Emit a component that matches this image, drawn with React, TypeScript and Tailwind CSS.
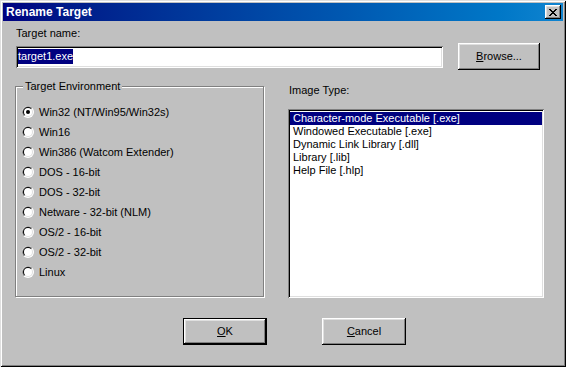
import React from 'react';

const sunken =
  'shadow-[inset_1px_1px_0_#808080,inset_-1px_-1px_0_#fff,inset_2px_2px_0_#000,inset_-2px_-2px_0_#dfdfdf]';
const raised =
  'shadow-[inset_-1px_-1px_0_#000,inset_1px_1px_0_#fff,inset_-2px_-2px_0_#808080,inset_2px_2px_0_#dfdfdf]';

const environments = [
  'Win32 (NT/Win95/Win32s)',
  'Win16',
  'Win386 (Watcom Extender)',
  'DOS - 16-bit',
  'DOS - 32-bit',
  'Netware - 32-bit (NLM)',
  'OS/2 - 16-bit',
  'OS/2 - 32-bit',
  'Linux',
];

const imageTypes = [
  'Character-mode Executable [.exe]',
  'Windowed Executable [.exe]',
  'Dynamic Link Library [.dll]',
  'Library [.lib]',
  'Help File [.hlp]',
];

function CloseGlyph() {
  // 8x7 pixel cross, like the classic caption button
  const px = [
    [0, 0], [1, 0], [6, 0], [7, 0],
    [1, 1], [2, 1], [5, 1], [6, 1],
    [2, 2], [3, 2], [4, 2], [5, 2],
    [3, 3], [4, 3],
    [2, 4], [3, 4], [4, 4], [5, 4],
    [1, 5], [2, 5], [5, 5], [6, 5],
    [0, 6], [1, 6], [6, 6], [7, 6],
  ];
  return (
    <svg width="8" height="7" viewBox="0 0 8 7" shapeRendering="crispEdges">
      {px.map(([x, y], i) => (
        <rect key={i} x={x} y={y} width="1" height="1" fill="#000" />
      ))}
    </svg>
  );
}

function Radio({ checked }: { checked?: boolean }) {
  return (
    <svg width="12" height="12" viewBox="0 0 12 12">
      <circle cx="6" cy="6" r="6" fill="#fff" />
      <path d="M1.76 10.24 A6 6 0 0 1 10.24 1.76 Z" fill="#808080" />
      <circle cx="6" cy="6" r="5" fill="#dfdfdf" />
      <path d="M2.46 9.54 A5 5 0 0 1 9.54 2.46 Z" fill="#000" />
      <circle cx="6" cy="6" r="4" fill="#fff" />
      {checked && <circle cx="6" cy="6" r="2" fill="#000" />}
    </svg>
  );
}

export default function App() {
  return (
    <div
      className={`w-[566px] h-[367px] bg-[#c0c0c0] p-[3px] flex flex-col text-[11px] text-black font-['Liberation_Sans',Arial,sans-serif] shadow-[inset_1px_1px_0_#dfdfdf,inset_-1px_-1px_0_#000,inset_2px_2px_0_#fff,inset_-2px_-2px_0_#808080]`}
    >
      {/* caption */}
      <div className="h-[18px] flex items-center justify-between pl-[3px] pr-[2px] bg-linear-to-r from-[#000080] to-[#1084d0]">
        <span className="text-white font-bold text-[12px] leading-[14px]">Rename Target</span>
        <button className={`w-[16px] h-[14px] bg-[#c0c0c0] flex items-center justify-center ${raised}`}>
          <CloseGlyph />
        </button>
      </div>

      <div className="flex flex-col pl-[13px]">
        <div className="mt-[6px] leading-[13px]">Target name:</div>

        <div className="flex items-center mt-[3px] h-[27px]">
          <div className={`w-[427px] h-[22px] bg-white flex items-center px-[2px] ${sunken}`}>
            <span className="bg-[#000080] text-white leading-[15px]">target1.exe</span>
          </div>
          <button className={`ml-[15px] w-[82px] h-[27px] bg-[#c0c0c0] flex items-center justify-center ${raised}`}>
            <span>
              <u>B</u>rowse...
            </span>
          </button>
        </div>

        <div className="flex items-start">
          {/* Target Environment group */}
          <div className="relative mt-[16px] ml-[-1px] w-[249px] h-[211px] border border-[#808080] shadow-[inset_1px_1px_0_#fff,1px_1px_0_#fff]">
            <span className="absolute left-[7px] top-[-7px] px-[2px] bg-[#c0c0c0] leading-[13px]">
              Target Environment
            </span>
            <div className="flex flex-col pt-[15px] pl-[6px]">
              {environments.map((env, i) => (
                <div key={env} className="h-[20px] flex items-center gap-[5px]">
                  <Radio checked={i === 0} />
                  <span className="leading-[13px]">{env}</span>
                </div>
              ))}
            </div>
          </div>

          {/* Image Type list */}
          <div className="ml-[24px] flex flex-col">
            <div className="mt-[14px] leading-[13px] pl-[1px]">Image Type:</div>
            <div className={`mt-[12px] w-[256px] h-[189px] bg-white p-[2px] pt-[3px] ${sunken}`}>
              {imageTypes.map((t, i) => (
                <div
                  key={t}
                  className={`h-[13px] leading-[13px] pl-[3px] ${i === 0 ? 'bg-[#000080] text-white' : ''}`}
                >
                  {t}
                </div>
              ))}
            </div>
          </div>
        </div>

        <div className="flex mt-[20px]">
          <button className={`ml-[167px] w-[84px] h-[27px] bg-[#c0c0c0] border border-black flex items-center justify-center ${raised}`}>
            <span>
              <u>O</u>K
            </span>
          </button>
          <button className={`ml-[55px] w-[84px] h-[27px] bg-[#c0c0c0] flex items-center justify-center ${raised}`}>
            <span>
              <u>C</u>ancel
            </span>
          </button>
        </div>
      </div>
    </div>
  );
}
